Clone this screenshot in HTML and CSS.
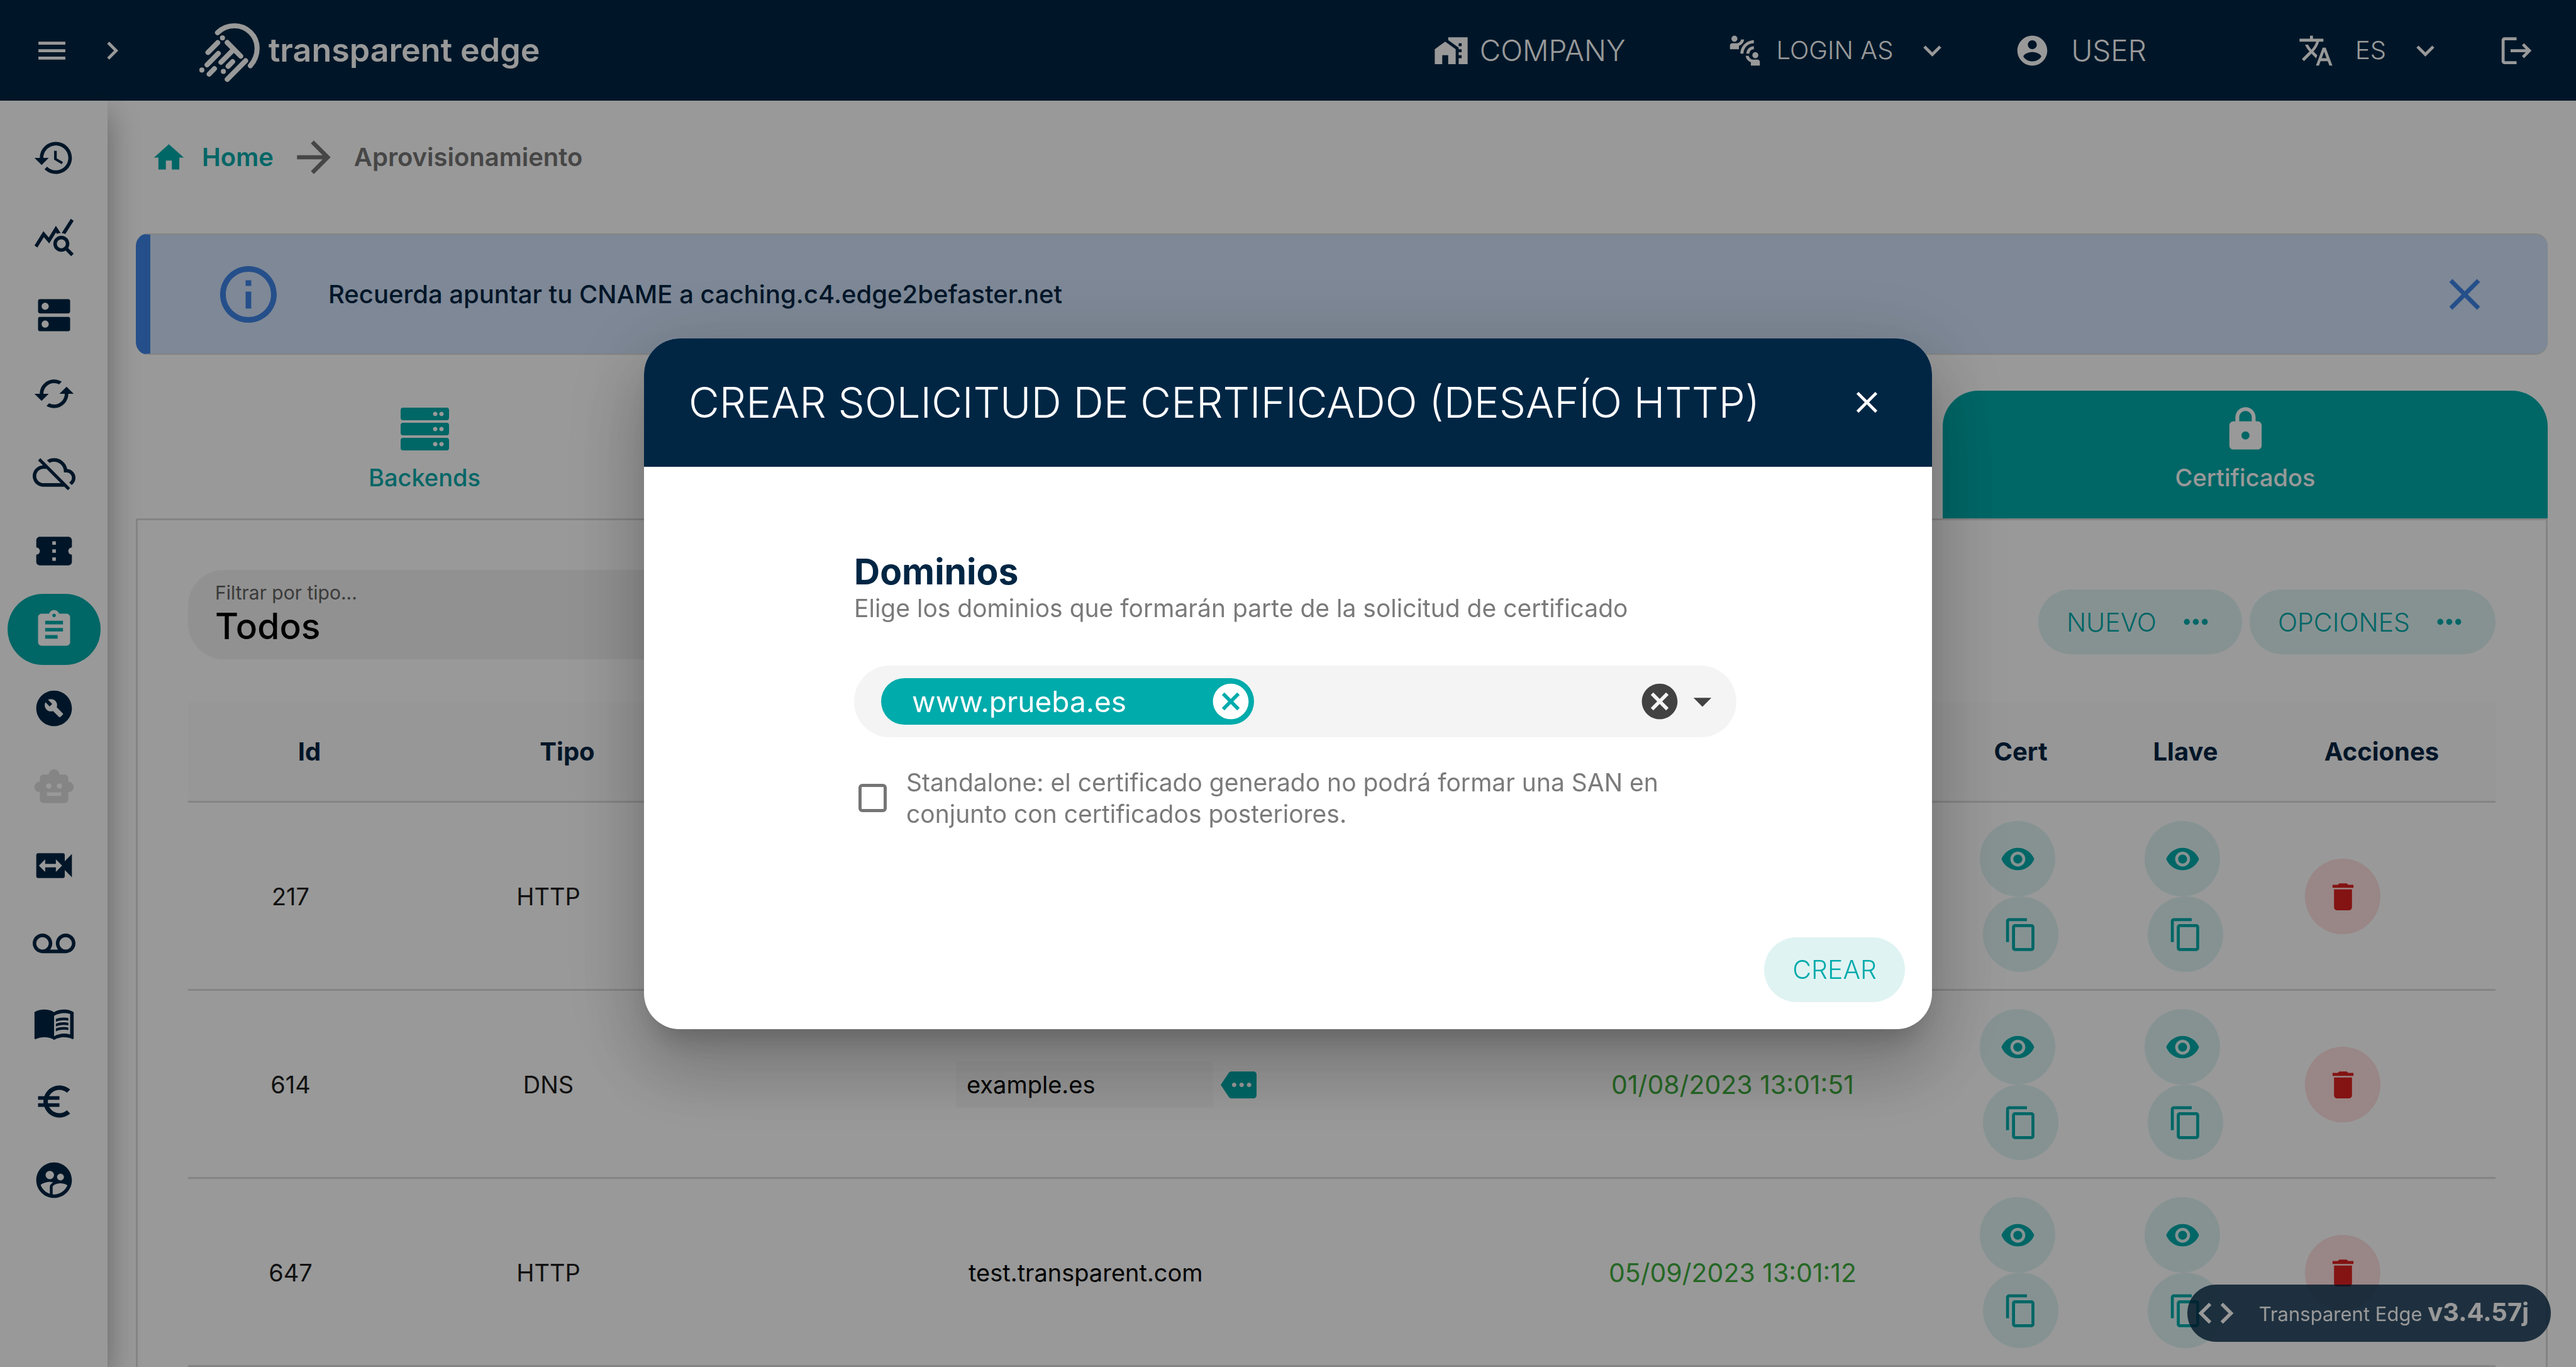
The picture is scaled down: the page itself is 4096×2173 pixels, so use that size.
FILE: index.html
```html
<!DOCTYPE html>
<html lang="es">
<head>
<meta charset="utf-8">
<meta name="viewport" content="width=device-width, initial-scale=1">
<title>Aprovisionamiento - Transparent Edge</title>
<link rel="stylesheet" href="styles.css">
</head>
<body>
<svg class="sprite" aria-hidden="true">
  <symbol id="i-expand" viewBox="0 0 24 24"><path d="M16.59 8.59L12 13.17 7.41 8.59 6 10l6 6 6-6z"/></symbol>
  <symbol id="i-close" viewBox="0 0 24 24"><path d="M19 6.41L17.59 5 12 10.59 6.41 5 5 6.41 10.59 12 5 17.59 6.41 19 12 13.41 17.59 19 19 17.59 13.41 12z"/></symbol>
  <symbol id="i-cancel" viewBox="0 0 24 24"><path d="M12 2C6.47 2 2 6.47 2 12s4.47 10 10 10 10-4.47 10-10S17.53 2 12 2zm5 13.59L15.59 17 12 13.41 8.41 17 7 15.59 10.59 12 7 8.41 8.41 7 12 10.59 15.59 7 17 8.41 13.41 12 17 15.59z"/></symbol>
  <symbol id="i-dots" viewBox="0 0 24 24"><path d="M6 10c-1.1 0-2 .9-2 2s.9 2 2 2 2-.9 2-2-.9-2-2-2zm12 0c-1.1 0-2 .9-2 2s.9 2 2 2 2-.9 2-2-.9-2-2-2zm-6 0c-1.1 0-2 .9-2 2s.9 2 2 2 2-.9 2-2-.9-2-2-2z"/></symbol>
  <symbol id="i-eye" viewBox="0 0 24 24"><path d="M12 4.5C7 4.5 2.73 7.61 1 12c1.73 4.39 6 7.5 11 7.5s9.27-3.11 11-7.5c-1.73-4.39-6-7.5-11-7.5zM12 17c-2.76 0-5-2.24-5-5s2.24-5 5-5 5 2.24 5 5-2.24 5-5 5zm0-8c-1.66 0-3 1.34-3 3s1.34 3 3 3 3-1.34 3-3-1.34-3-3-3z"/></symbol>
  <symbol id="i-copy" viewBox="0 0 24 24"><path d="M16 1H4c-1.1 0-2 .9-2 2v14h2V3h12V1zm3 4H8c-1.1 0-2 .9-2 2v14c0 1.1.9 2 2 2h11c1.1 0 2-.9 2-2V7c0-1.1-.9-2-2-2zm0 16H8V7h11v14z"/></symbol>
  <symbol id="i-trash" viewBox="0 0 24 24"><path d="M6 19c0 1.1.9 2 2 2h8c1.1 0 2-.9 2-2V7H6v12zM19 4h-3.500l-1-1h-5l-1 1H5v2h14V4z"/></symbol>
</svg>

<div class="app">
  <header class="topbar">
    <button class="bar-btn menu-btn" aria-label="Menú"><svg class="icon" viewBox="0 0 24 24"><path d="M3 18h18v-2H3v2zm0-5h18v-2H3v2zm0-7v2h18V6H3z"/></svg></button>
    <button class="bar-btn expand-btn" aria-label="Expandir"><svg class="icon" viewBox="0 0 24 24"><path d="M10 6L8.590 7.410 13.170 12l-4.580 4.590L10 18l6-6z"/></svg></button>
    <a class="brand" href="#">
      <svg class="brand-mark" viewBox="0 0 480 480" fill="none" stroke="currentColor" stroke-width="34" stroke-linecap="round">
        <path d="M168 122C207 83 245 76 282 76C364 76 433 142 433 226C433 268 418 308 388 343"/>
        <path d="M169 189L104 254M173 261L98 337M147 363L112 399M233 188L323 279M273 237L191 320M269 316L239 347M356 310L233 434"/>
        <path d="M201 157h.1M63 372h.1M207 381h.1"/>
      </svg>
      <span class="brand-name">transparent edge</span>
    </a>
    <div class="topbar-right">
      <button class="bar-btn company"><svg class="icon" viewBox="0 0 24 24"><path d="M1 11v10h5v-6h4v6h5V11L8 6z"/><path d="M10 3v1.970l7 5V11h2v2h-2v2h2v2h-2v4h6V3H10zm9 6h-2V7h2v2z"/></svg>COMPANY</button>
      <button class="bar-btn login"><svg class="icon" viewBox="0 0 24 24"><path d="M11 14H9c0-4.970 4.030-9 9-9v2c-3.870 0-7 3.130-7 7zm7-3V9c-2.760 0-5 2.240-5 5h2c0-1.660 1.340-3 3-3zM7 4c0-1.110-.89-2-2-2s-2 .89-2 2 .89 2 2 2 2-.89 2-2zm4.450.5h-2C9.210 5.920 7.990 7 6.500 7h-3C2.670 7 2 7.670 2 8.500V11h6V8.740c1.860-.59 3.250-2.230 3.450-4.240zM19 17c1.110 0 2-.89 2-2s-.89-2-2-2-2 .89-2 2 .89 2 2 2zm1.500 1h-3c-1.490 0-2.710-1.080-2.950-2.500h-2c.2 2.010 1.590 3.650 3.450 4.240V22h6v-2.500c0-.83-.67-1.500-1.500-1.500z"/></svg>LOGIN AS<svg class="icon caret"><use href="#i-expand"/></svg></button>
      <button class="bar-btn user"><svg class="icon" viewBox="0 0 24 24"><path d="M12 2C6.480 2 2 6.480 2 12s4.480 10 10 10 10-4.480 10-10S17.520 2 12 2zm0 3c1.660 0 3 1.340 3 3s-1.340 3-3 3-3-1.340-3-3 1.340-3 3-3zm0 14.200c-2.500 0-4.710-1.280-6-3.220.03-1.990 4-3.080 6-3.080 1.990 0 5.970 1.090 6 3.080-1.290 1.940-3.500 3.220-6 3.220z"/></svg>USER</button>
      <button class="bar-btn lang"><svg class="icon" viewBox="0 0 24 24"><path d="M12.870 15.070l-2.540-2.510.03-.03c1.740-1.940 2.980-4.170 3.710-6.530H17V4h-7V2H8v2H1v1.990h11.170C11.500 7.920 10.440 9.750 9 11.350 8.070 10.320 7.300 9.190 6.690 8h-2c.73 1.630 1.730 3.170 2.980 4.560l-5.090 5.020L4 19l5-5 3.110 3.110.76-2.040zM18.500 10h-2L12 22h2l1.120-3h4.750L21 22h2l-4.500-12zm-2.620 7l1.620-4.330L19.120 17h-3.240z"/></svg>ES<svg class="icon caret"><use href="#i-expand"/></svg></button>
      <button class="bar-btn logout" aria-label="Salir"><svg class="icon" viewBox="0 0 24 24"><path d="M17 7l-1.410 1.410L18.170 11H8v2h10.170l-2.580 2.580L17 17l5-5zM4 5h8V3H4c-1.100 0-2 .9-2 2v14c0 1.100.9 2 2 2h8v-2H4V5z"/></svg></button>
    </div>
  </header>

  <div class="shell">
    <nav class="sidebar" aria-label="Secciones">
      <a class="nav-item" href="#" aria-label="Historial"><svg viewBox="0 0 24 24"><path d="M13 3c-4.970 0-9 4.030-9 9H1l3.890 3.890.07.14L9 12H6c0-3.870 3.130-7 7-7s7 3.130 7 7-3.130 7-7 7c-1.930 0-3.680-.79-4.940-2.060l-1.420 1.420C8.270 19.990 10.510 21 13 21c4.970 0 9-4.030 9-9s-4.030-9-9-9zm-1 5v5l4.280 2.540.72-1.210-3.500-2.080V8H12z"/></svg></a>
      <a class="nav-item" href="#" aria-label="Estadísticas"><svg viewBox="0 0 24 24"><path d="M19.880 18.470c.44-.7.7-1.510.7-2.390 0-2.490-2.010-4.500-4.500-4.500s-4.500 2.010-4.500 4.500 2.010 4.500 4.490 4.500c.88 0 1.700-.26 2.390-.7L21.580 23 23 21.580l-3.120-3.110zm-3.800.11c-1.380 0-2.500-1.120-2.500-2.500s1.120-2.500 2.500-2.500 2.500 1.120 2.500 2.500-1.120 2.500-2.500 2.500zm-.36-8.500c-.74.02-1.450.18-2.100.45l-.55-.83-3.800 6.180-3.010-3.520-3.630 5.810L1 17l5-8 3 3.500L13 6l2.720 4.080zm2.590.5c-.64-.28-1.330-.45-2.050-.49L21.380 2 23 3.180l-4.690 7.400z"/></svg></a>
      <a class="nav-item" href="#" aria-label="DNS"><svg viewBox="0 0 24 24"><path d="M20 13H4c-.55 0-1 .45-1 1v6c0 .55.45 1 1 1h16c.55 0 1-.45 1-1v-6c0-.55-.45-1-1-1zM7 19c-1.100 0-2-.9-2-2s.9-2 2-2 2 .9 2 2-.9 2-2 2zM20 3H4c-.55 0-1 .45-1 1v6c0 .55.45 1 1 1h16c.55 0 1-.45 1-1V4c0-.55-.45-1-1-1zM7 9c-1.100 0-2-.9-2-2s.9-2 2-2 2 .9 2 2-.9 2-2 2z"/></svg></a>
      <a class="nav-item" href="#" aria-label="Caché"><svg viewBox="0 0 24 24"><path d="M19 8l-4 4h3c0 3.310-2.690 6-6 6-1.010 0-1.970-.25-2.800-.7l-1.460 1.460C8.970 19.540 10.430 20 12 20c4.420 0 8-3.580 8-8h3l-4-4zM6 12c0-3.310 2.690-6 6-6 1.010 0 1.970.25 2.800.7l1.460-1.460C15.030 4.460 13.570 4 12 4c-4.420 0-8 3.580-8 8H1l4 4 4-4H6z"/></svg></a>
      <a class="nav-item" href="#" aria-label="Nube"><svg viewBox="0 0 24 24"><path d="M19.350 10.040C18.670 6.590 15.640 4 12 4c-1.480 0-2.850.43-4.010 1.170l1.460 1.460C10.210 6.230 11.080 6 12 6c3.040 0 5.500 2.460 5.500 5.500v.5H19c1.660 0 3 1.340 3 3 0 1.130-.64 2.110-1.560 2.620l1.450 1.450C23.160 18.160 24 16.680 24 15c0-2.640-2.050-4.780-4.650-4.960zM3 5.270l2.750 2.740C2.560 8.150 0 10.770 0 14c0 3.310 2.690 6 6 6h11.730l2 2L21 20.730 4.270 4 3 5.270zM7.730 10l8 8H6c-2.210 0-4-1.790-4-4s1.790-4 4-4h1.730z"/></svg></a>
      <a class="nav-item" href="#" aria-label="Tickets"><svg viewBox="0 0 24 24"><path d="M22 10V6c0-1.110-.9-2-2-2H4c-1.100 0-1.990.89-1.990 2v4c1.100 0 1.990.9 1.990 2s-.89 2-2 2v4c0 1.100.9 2 2 2h16c1.100 0 2-.9 2-2v-4c-1.100 0-2-.9-2-2s.9-2 2-2zm-9 7.500h-2v-2h2v2zm0-4.500h-2v-2h2v2zm0-4.500h-2v-2h2v2z"/></svg></a>
      <a class="nav-item active" href="#" aria-label="Aprovisionamiento" aria-current="page"><svg viewBox="0 0 24 24"><path d="M19 3h-4.180C14.400 1.840 13.300 1 12 1c-1.300 0-2.400.84-2.820 2H5c-1.100 0-2 .9-2 2v14c0 1.100.9 2 2 2h14c1.100 0 2-.9 2-2V5c0-1.100-.9-2-2-2zm-7 0c.55 0 1 .45 1 1s-.45 1-1 1-1-.45-1-1 .45-1 1-1zm2 14H7v-2h7v2zm3-4H7v-2h10v2zm0-4H7V7h10v2z"/></svg></a>
      <a class="nav-item" href="#" aria-label="Herramientas"><svg viewBox="0 0 24 24"><path fill-rule="evenodd" d="M12 2C6.480 2 2 6.480 2 12s4.480 10 10 10 10-4.480 10-10S17.520 2 12 2zM16.900 15.490l-1.400 1.400c-.2.2-.51.2-.71 0l-3.410-3.410c-1.220.43-2.640.17-3.620-.81-1.110-1.110-1.300-2.790-.59-4.100l2.350 2.350 1.410-1.410-2.350-2.340c1.320-.71 2.990-.52 4.100.59.98.98 1.240 2.400.81 3.620l3.410 3.410c.2.19.2.51 0 .7z"/></svg></a>
      <a class="nav-item disabled" href="#" aria-label="Bots" aria-disabled="true"><svg viewBox="0 0 24 24"><path d="M20 9V7c0-1.100-.9-2-2-2h-3c0-1.660-1.340-3-3-3S9 3.340 9 5H6c-1.100 0-2 .9-2 2v2c-1.660 0-3 1.340-3 3s1.340 3 3 3v4c0 1.100.9 2 2 2h12c1.100 0 2-.9 2-2v-4c1.660 0 3-1.340 3-3s-1.340-3-3-3zM7.500 11.500c0-.83.67-1.500 1.500-1.500s1.500.67 1.500 1.500S9.830 13 9 13s-1.500-.67-1.500-1.500zM16 17H8v-2h8v2zm-1-4c-.83 0-1.500-.67-1.500-1.500S14.170 10 15 10s1.500.67 1.500 1.500S15.830 13 15 13z"/></svg></a>
      <a class="nav-item" href="#" aria-label="Vídeo"><svg viewBox="0 0 24 24"><path d="M18 9.500V6c0-.55-.45-1-1-1H3c-.55 0-1 .45-1 1v12c0 .55.45 1 1 1h14c.55 0 1-.45 1-1v-3.500l4 4v-13l-4 4zm-5 6V13H7v2.500L3.500 12 7 8.500V11h6V8.500l3.500 3.500-3.500 3.500z"/></svg></a>
      <a class="nav-item" href="#" aria-label="Grabaciones"><svg viewBox="0 0 24 24"><path d="M18.500 6C15.460 6 13 8.460 13 11.500c0 1.330.47 2.550 1.260 3.500H9.740c.79-.95 1.260-2.170 1.260-3.500C11 8.460 8.540 6 5.500 6S0 8.460 0 11.500 2.460 17 5.500 17h13c3.040 0 5.500-2.460 5.500-5.500S21.540 6 18.500 6zm-13 9C3.570 15 2 13.430 2 11.500S3.570 8 5.500 8 9 9.570 9 11.500 7.430 15 5.500 15zm13 0c-1.930 0-3.500-1.570-3.500-3.500S16.570 8 18.500 8 22 9.570 22 11.500 20.430 15 18.500 15z"/></svg></a>
      <a class="nav-item" href="#" aria-label="Documentación"><svg viewBox="0 0 24 24"><path d="M21 5c-1.110-.35-2.330-.5-3.500-.5-1.950 0-4.050.4-5.500 1.500-1.450-1.100-3.550-1.500-5.500-1.500S2.450 4.900 1 6v14.650c0 .25.25.5.5.5.1 0 .15-.05.25-.05C3.100 20.450 5.050 20 6.500 20c1.950 0 4.050.4 5.500 1.500 1.350-.85 3.800-1.500 5.500-1.500 1.650 0 3.350.3 4.750 1.050.1.05.15.05.25.05.25 0 .5-.25.5-.5V6c-.6-.45-1.250-.75-2-1zm0 13.500c-1.100-.35-2.300-.5-3.500-.5-1.700 0-4.150.65-5.500 1.500V8c1.350-.85 3.800-1.500 5.500-1.500 1.200 0 2.400.15 3.500.5v11.500z"/><path d="M17.500 10.500c.88 0 1.730.09 2.500.26V9.240c-.79-.15-1.640-.24-2.500-.24-1.700 0-3.240.29-4.500.83v1.660c1.130-.64 2.700-.99 4.500-.99zM13 12.490v1.660c1.130-.64 2.700-.99 4.500-.99.88 0 1.730.09 2.500.26V11.900c-.79-.15-1.640-.24-2.500-.24-1.700 0-3.240.3-4.500.83zm4.500 1.840c-1.700 0-3.240.29-4.500.83v1.660c1.130-.64 2.700-.99 4.500-.99.88 0 1.730.09 2.500.26v-1.520c-.79-.16-1.640-.24-2.500-.24z"/></svg></a>
      <a class="nav-item" href="#" aria-label="Facturación"><svg viewBox="0 0 24 24"><path d="M15 18.500c-2.510 0-4.680-1.420-5.760-3.500H15v-2H8.580c-.05-.33-.08-.66-.08-1s.03-.67.08-1H15V9H9.240C10.320 6.920 12.500 5.500 15 5.500c1.610 0 3.090.59 4.230 1.570L21 5.300C19.410 3.870 17.300 3 15 3c-3.920 0-7.240 2.510-8.480 6H3v2h3.060c-.04.33-.06.66-.06 1s.02.67.06 1H3v2h3.520c1.240 3.490 4.560 6 8.480 6 2.310 0 4.410-.87 6-2.300l-1.780-1.770c-1.130.98-2.600 1.570-4.220 1.570z"/></svg></a>
      <a class="nav-item" href="#" aria-label="Usuarios"><svg viewBox="0 0 24 24"><path d="M11.990 2c-5.520 0-10 4.480-10 10s4.480 10 10 10 10-4.480 10-10-4.480-10-10-10zm3.610 6.340c1.070 0 1.930.86 1.930 1.930 0 1.070-.86 1.930-1.930 1.930-1.070 0-1.930-.86-1.930-1.930-.01-1.070.86-1.930 1.930-1.930zm-6-1.580c1.300 0 2.360 1.060 2.360 2.360 0 1.300-1.060 2.360-2.360 2.360s-2.360-1.060-2.360-2.360c0-1.310 1.050-2.360 2.360-2.360zm0 9.130v3.750c-2.400-.75-4.300-2.600-5.140-4.960 1.050-1.120 3.670-1.690 5.140-1.690.53 0 1.200.08 1.900.22-1.640.87-1.900 2.020-1.900 2.680zM11.990 20c-.27 0-.53-.01-.79-.04v-4.070c0-1.420 2.940-2.130 4.400-2.130 1.070 0 2.920.39 3.840 1.150-1.170 2.970-4.060 5.090-7.450 5.090z"/></svg></a>
    </nav>

    <main class="main">
      <nav class="breadcrumb" aria-label="Ruta">
        <a class="crumb-home" href="#"><svg class="icon" viewBox="0 0 24 24"><path d="M10 20v-6h4v6h5v-8h3L12 3 2 12h3v8z"/></svg>Home</a>
        <svg class="crumb-arrow" viewBox="0 0 24 24"><path d="M12 4l-1.410 1.410L16.170 11H4v2h12.170l-5.580 5.590L12 20l8-8z"/></svg>
        <span class="crumb-current">Aprovisionamiento</span>
      </nav>

      <div class="notice" role="status">
        <svg class="notice-icon" viewBox="0 0 24 24"><path d="M11 7h2v2h-2zm0 4h2v6h-2zm1-9C6.480 2 2 6.480 2 12s4.480 10 10 10 10-4.480 10-10S17.520 2 12 2zm0 18c-4.410 0-8-3.590-8-8s3.590-8 8-8 8 3.590 8 8-3.590 8-8 8z"/></svg>
        <p class="notice-text">Recuerda apuntar tu CNAME a caching.c4.edge2befaster.net</p>
        <button class="notice-close" aria-label="Cerrar aviso"><svg><use href="#i-close"/></svg></button>
      </div>

      <div class="tabs">
        <button class="tab"><svg class="tab-icon" viewBox="0 0 77 77"><path fill-rule="evenodd" d="M4 4h69a4 4 0 0 1 4 4v12a4 4 0 0 1-4 4H4a4 4 0 0 1-4-4V8a4 4 0 0 1 4-4zM55 10.500a3.500 3.500 0 1 0 .01 0zM65 10.500a3.500 3.500 0 1 0 .01 0zM4 28h69a4 4 0 0 1 4 4v12a4 4 0 0 1-4 4H4a4 4 0 0 1-4-4V32a4 4 0 0 1 4-4zM55 34.500a3.500 3.500 0 1 0 .01 0zM65 34.500a3.500 3.500 0 1 0 .01 0zM4 52h69a4 4 0 0 1 4 4v12a4 4 0 0 1-4 4H4a4 4 0 0 1-4-4V56a4 4 0 0 1 4-4zM55 58.500a3.500 3.500 0 1 0 .01 0zM65 58.500a3.500 3.500 0 1 0 .01 0z"/></svg>Backends</button>
        <button class="tab selected"><svg class="tab-icon" viewBox="0 0 24 24"><path d="M18 8h-1V6c0-2.760-2.240-5-5-5S7 3.240 7 6v2H6c-1.100 0-2 .9-2 2v10c0 1.100.9 2 2 2h12c1.100 0 2-.9 2-2V10c0-1.100-.9-2-2-2zm-6 9c-1.100 0-2-.9-2-2s.9-2 2-2 2 .9 2 2-.9 2-2 2zm3.100-9H8.900V6c0-1.710 1.390-3.100 3.100-3.100 1.710 0 3.100 1.390 3.100 3.100v2z"/></svg>Certificados</button>
      </div>

      <section class="panel">
        <div class="toolbar">
          <div class="filter">
            <label for="tipo">Filtrar por tipo...</label>
            <select id="tipo"><option>Todos</option></select>
          </div>
          <div class="actions">
            <button class="pill-btn">NUEVO<svg class="icon"><use href="#i-dots"/></svg></button>
            <button class="pill-btn">OPCIONES<svg class="icon"><use href="#i-dots"/></svg></button>
          </div>
        </div>

        <table class="certs">
          <colgroup><col class="c-id"><col class="c-type"><col class="c-domain"><col class="c-date"><col class="c-cert"><col class="c-cert"><col class="c-act"></colgroup>
          <thead>
            <tr><th class="sortable">Id</th><th class="sortable">Tipo</th><th></th><th></th><th>Cert</th><th>Llave</th><th>Acciones</th></tr>
          </thead>
          <tbody>
            <tr>
              <td>217</td><td>HTTP</td><td></td><td></td>
              <td><div class="pair"><button class="round view" aria-label="Ver certificado"><svg class="icon"><use href="#i-eye"/></svg></button><button class="round" aria-label="Copiar certificado"><svg class="icon"><use href="#i-copy"/></svg></button></div></td>
              <td><div class="pair"><button class="round view" aria-label="Ver llave"><svg class="icon"><use href="#i-eye"/></svg></button><button class="round" aria-label="Copiar llave"><svg class="icon"><use href="#i-copy"/></svg></button></div></td>
              <td class="act"><button class="round danger" aria-label="Eliminar"><svg class="icon"><use href="#i-trash"/></svg></button></td>
            </tr>
            <tr>
              <td>614</td><td>DNS</td>
              <td><div class="domain"><span class="domain-box">example.es</span><svg class="icon tag" viewBox="0 0 24 24"><path d="M22 3H7c-.69 0-1.230.35-1.590.88L0 12l5.410 8.110c.36.53.97.89 1.660.89H22c1.100 0 2-.9 2-2V5c0-1.100-.9-2-2-2zM9 13.500c-.83 0-1.500-.67-1.500-1.500s.67-1.500 1.500-1.500 1.500.67 1.500 1.500-.67 1.500-1.500 1.500zm5 0c-.83 0-1.500-.67-1.500-1.500s.67-1.500 1.500-1.500 1.500.67 1.500 1.500-.67 1.500-1.500 1.500zm5 0c-.83 0-1.500-.67-1.500-1.500s.67-1.500 1.500-1.500 1.500.67 1.500 1.500-.67 1.500-1.500 1.500z"/></svg></div></td>
              <td class="date">01/08/2023 13:01:51</td>
              <td><div class="pair"><button class="round view" aria-label="Ver certificado"><svg class="icon"><use href="#i-eye"/></svg></button><button class="round" aria-label="Copiar certificado"><svg class="icon"><use href="#i-copy"/></svg></button></div></td>
              <td><div class="pair"><button class="round view" aria-label="Ver llave"><svg class="icon"><use href="#i-eye"/></svg></button><button class="round" aria-label="Copiar llave"><svg class="icon"><use href="#i-copy"/></svg></button></div></td>
              <td class="act"><button class="round danger" aria-label="Eliminar"><svg class="icon"><use href="#i-trash"/></svg></button></td>
            </tr>
            <tr>
              <td>647</td><td>HTTP</td>
              <td><div class="domain"><span class="domain-name">test.transparent.com</span></div></td>
              <td class="date">05/09/2023 13:01:12</td>
              <td><div class="pair"><button class="round view" aria-label="Ver certificado"><svg class="icon"><use href="#i-eye"/></svg></button><button class="round" aria-label="Copiar certificado"><svg class="icon"><use href="#i-copy"/></svg></button></div></td>
              <td><div class="pair"><button class="round view" aria-label="Ver llave"><svg class="icon"><use href="#i-eye"/></svg></button><button class="round" aria-label="Copiar llave"><svg class="icon"><use href="#i-copy"/></svg></button></div></td>
              <td class="act"><button class="round danger" aria-label="Eliminar"><svg class="icon"><use href="#i-trash"/></svg></button></td>
            </tr>
          </tbody>
        </table>
      </section>
    </main>
  </div>

  <div class="version"><svg class="version-icon" viewBox="0 0 24 24"><path d="M9.400 16.600L4.800 12l4.600-4.600L8 6l-6 6 6 6 1.400-1.400zm5.200 0l4.600-4.600-4.600-4.600L16 6l6 6-6 6-1.400-1.400z"/></svg><span>Transparent Edge <b>v3.4.57j</b></span></div>
</div>

<div class="overlay">
  <div class="modal" role="dialog" aria-modal="true" aria-labelledby="modal-title">
    <div class="modal-head">
      <h1 id="modal-title">CREAR SOLICITUD DE CERTIFICADO (DESAFÍO HTTP)</h1>
      <button class="modal-close" aria-label="Cerrar"><svg class="icon"><use href="#i-close"/></svg></button>
    </div>
    <form class="modal-body">
      <div class="fields">
        <h2>Dominios</h2>
        <p class="hint">Elige los dominios que formarán parte de la solicitud de certificado</p>
        <div class="combo">
          <span class="chip">www.prueba.es<button type="button" aria-label="Quitar www.prueba.es"><svg class="mid"><use href="#i-cancel"/></svg></button></span>
          <input class="combo-input" type="text" aria-label="Dominios">
          <button type="button" class="combo-btn" aria-label="Limpiar"><svg class="mid"><use href="#i-cancel"/></svg></button>
          <button type="button" class="combo-btn" aria-label="Abrir lista"><svg class="mid" viewBox="0 0 24 24"><path d="M7 10l5 5 5-5z"/></svg></button>
        </div>
        <div class="check">
          <input type="checkbox" id="standalone">
          <label for="standalone">Standalone: el certificado generado no podrá formar una SAN en conjunto con certificados posteriores.</label>
        </div>
      </div>
      <div class="modal-foot"><button type="button" class="pill-btn create">CREAR</button></div>
    </form>
  </div>
</div>
</body>
</html>
```
FILE: styles.css
```css
:root {
  --navy: #002644;
  --teal: #00abab;
  --teal-soft: #e0f3f3;
  --line: #dcdcdc;
  --blue: #3f84e6;
}

* { box-sizing: border-box; }

body {
  margin: 0;
  background: #fff;
  color: #1d1d1d;
  font: 400 38px/50px Inter, "Liberation Sans", sans-serif;
}

button, input, select { font: inherit; color: inherit; }
button { display: flex; align-items: center; justify-content: center; margin: 0; padding: 0; border: 0; background: none; cursor: pointer; }
a { color: inherit; text-decoration: none; }
svg { display: block; flex: none; fill: currentColor; }
h1, h2, p { margin: 0; }

.sprite { position: absolute; width: 0; height: 0; }
.icon { width: 57px; height: 57px; }
.mid { width: 68px; height: 68px; }

.app { display: flex; flex-direction: column; height: 100vh; overflow: hidden; }

/* Top bar */
.topbar {
  display: flex;
  align-items: center;
  flex: none;
  height: 160px;
  padding: 0 66px 0 54px;
  background: var(--navy);
  color: #fff;
}
.bar-btn { font-size: 40px; font-weight: 300; }
.expand-btn { margin-left: 39px; }
.brand { display: flex; align-items: center; gap: 7px; margin-left: 99px; }
.brand-mark { width: 114px; height: 114px; fill: none; }
.brand-name { font-size: 52px; font-weight: 600; line-height: 64px; }
.topbar-right { display: flex; align-items: center; margin-left: auto; }
.company { gap: 17px; font-size: 46px; }
.login { gap: 22px; margin-left: 161px; }
.login .caret { margin-left: 12px; }
.user { gap: 33px; margin-left: 102px; font-size: 46px; }
.lang { gap: 34px; margin-left: 241px; }
.logout { margin-left: 88px; }

/* Shell */
.shell { display: flex; flex: 1; min-height: 0; }
.sidebar {
  display: flex;
  flex-direction: column;
  align-items: center;
  gap: 12px;
  flex: none;
  width: 171px;
  padding-top: 34px;
  background: #fff;
  color: var(--navy);
  box-shadow: 4px 20px 44px rgba(0, 0, 0, .3);
}
.nav-item { display: flex; align-items: center; justify-content: center; flex: none; width: 148px; height: 113px; border-radius: 57px; }
.nav-item svg { width: 68px; height: 68px; }
.nav-item.active { background: var(--teal); color: #fff; }
.nav-item.disabled { color: #dedede; }

.main { display: flex; flex-direction: column; flex: 1; min-width: 0; padding: 50px 45px 0; }

.breadcrumb { display: flex; align-items: center; gap: 24px; height: 80px; padding-left: 24px; font-size: 40px; font-weight: 600; color: #757575; }
.crumb-home { display: flex; align-items: center; gap: 24px; color: var(--teal); }
.crumb-arrow { width: 80px; height: 80px; }

.notice {
  display: flex;
  align-items: center;
  flex: none;
  height: 193px;
  margin-top: 81px;
  padding: 0 90px 0 102px;
  border: solid var(--line);
  border-width: 2px 0;
  border-left: 23px solid var(--blue);
  border-radius: 20px;
  background: #d2e3fa;
}
.notice-icon { width: 108px; height: 108px; color: var(--blue); }
.notice-text { flex: 1; margin-left: 73px; color: var(--navy); font-size: 40px; font-weight: 500; }
.notice-close { color: var(--blue); }
.notice-close svg { width: 84px; height: 84px; }

/* Tabs */
.tabs { display: grid; flex: none; grid-template-columns: 918fr 977fr 978fr 962fr; margin-top: 57px; }
.tab { flex-direction: column; gap: 13px; padding: 23px 0 40px; color: var(--teal); font-weight: 500; }
.tab-icon { width: 77px; height: 77px; }
.tab.selected { grid-column: 4; border-radius: 57px 57px 0 0; background: var(--teal); color: #fff; }

.panel { flex: 1; padding: 79px 80px 0; border: 3px solid var(--line); border-bottom: 0; }
.toolbar { display: flex; align-items: center; justify-content: space-between; }
.filter { display: flex; flex-direction: column; width: 1000px; height: 142px; padding: 16px 43px 0; border-radius: 57px; background: #f2f2f2; }
.filter label { color: #616161; font-size: 30px; line-height: 40px; }
.filter select { width: 100%; height: 68px; padding: 0; border: 0; background: none; color: #000; font-size: 57px; font-weight: 500; line-height: 68px; appearance: none; }
.actions { display: flex; gap: 12px; padding-top: 23px; }
.pill-btn { gap: 34px; height: 103px; padding: 0 45px; border-radius: 52px; background: var(--teal-soft); color: var(--teal); font-size: 41px; font-weight: 300; }

/* Certificates */
.certs { width: 100%; margin-top: 68px; border-collapse: separate; border-spacing: 0; table-layout: fixed; }
.c-id { width: 326px; }
.c-type { width: 494px; }
.c-date { width: 654px; }
.c-cert { width: 262px; }
.c-act { width: 362px; }
.certs th { height: 160px; padding: 0; border-bottom: 3px solid var(--line); background: #fcfcfc; color: var(--navy); font-size: 40px; font-weight: 700; text-align: center; }
.certs th.sortable { padding-left: 60px; }
.certs td { height: 299px; padding: 2px 0 0; border-bottom: 3px solid var(--line); text-align: center; }
.certs td.date { color: #3eac3e; font-size: 41px; }
.certs td.act { padding-left: 59px; }
.pair { display: flex; flex-direction: column; align-items: center; }
.round { width: 120px; height: 120px; border-radius: 50%; background: var(--teal-soft); color: var(--teal); }
.round.view { margin-right: 10px; }
.round.danger { background: #ffdfdf; color: #dd2020; }
.domain { display: flex; align-items: center; padding-left: 401px; color: #000; }
.domain-box { width: 409px; padding: 12px 17px; background: #f9f9f9; text-align: left; }
.domain-name { padding-left: 20px; }
.tag { margin-left: 12px; color: var(--teal); }

.version {
  position: fixed;
  right: 40px;
  bottom: 40px;
  display: flex;
  align-items: center;
  gap: 35px;
  height: 91px;
  padding: 0 35px 0 12px;
  border-radius: 46px;
  background: rgba(0, 38, 68, .8);
  color: #fff;
  font-size: 31px;
}
.version-icon { width: 67px; height: 67px; }
.version b { font-size: 40px; font-weight: 700; }

/* Dialog */
.overlay { position: fixed; inset: 0; display: flex; align-items: center; justify-content: center; background: rgba(0, 0, 0, .4); }
.modal {
  width: 50%;
  overflow: hidden;
  border-radius: 57px;
  background: #fff;
  box-shadow: 0 31px 43px -20px rgba(0, 0, 0, .2), 0 68px 108px 9px rgba(0, 0, 0, .14), 0 26px 131px 23px rgba(0, 0, 0, .12);
}
.modal-head { display: flex; align-items: center; justify-content: space-between; height: 204px; padding: 0 75px 0 71px; background: var(--navy); color: #fff; }
.modal-head h1 { font-size: 67px; font-weight: 300; line-height: 80px; }
.modal-body { padding: 134px 43px 43px; }
.fields { margin: 0 268px 0 291px; color: #7a7a7a; }
.fields h2 { color: var(--navy); font-size: 57px; font-weight: 700; line-height: 66px; }
.hint { font-size: 39px; white-space: nowrap; }
.combo { display: flex; align-items: center; height: 114px; margin-top: 66px; padding: 0 20px 0 43px; border-radius: 57px; background: #f4f4f4; }
.chip { display: flex; align-items: center; justify-content: space-between; width: 593px; height: 74px; padding: 0 3px 0 49px; border-radius: 37px; background: var(--teal); color: #fff; font-size: 46px; }
.combo-input { flex: 1; min-width: 0; padding: 0; border: 0; outline: 0; background: none; }
.combo-btn { color: #424242; }
.check { display: flex; align-items: center; gap: 31px; margin-top: 47px; padding-left: 7px; font-size: 39px; }
.check input { flex: none; width: 45px; height: 45px; margin: 0; border: 5px solid #757575; border-radius: 6px; appearance: none; }
.modal-foot { display: flex; justify-content: flex-end; margin-top: 171px; }
```
